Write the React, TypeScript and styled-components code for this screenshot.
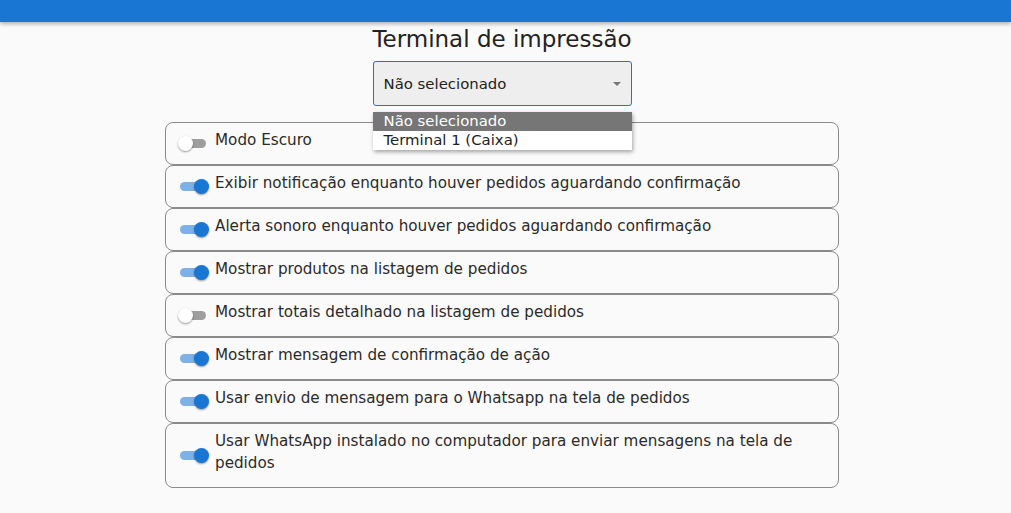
import * as React from "react";
import styled, { createGlobalStyle } from "styled-components";

const GlobalStyle = createGlobalStyle`
    html, body {
        margin: 0;
        padding: 0;
        background: #fafafa;
        font-family: "DejaVu Sans", Verdana, sans-serif;
        color: #333;
    }
`

interface Setting {
    label: string
    on: boolean
}

const settings: Setting[] = [
    {label: "Modo Escuro", on: false},
    {label: "Exibir notificação enquanto houver pedidos aguardando confirmação", on: true},
    {label: "Alerta sonoro enquanto houver pedidos aguardando confirmação", on: true},
    {label: "Mostrar produtos na listagem de pedidos", on: true},
    {label: "Mostrar totais detalhado na listagem de pedidos", on: false},
    {label: "Mostrar mensagem de confirmação de ação", on: true},
    {label: "Usar envio de mensagem para o Whatsapp na tela de pedidos", on: true},
    {label: "Usar WhatsApp instalado no computador para enviar mensagens na tela de pedidos", on: true},
];

export default function App() {
    return <>
        <GlobalStyle/>
        <TopBar/>
        <Page>
            <Title>Terminal de impressão</Title>
            <SelectWrap>
                <SelectBox>
                    <span>Não selecionado</span>
                    <Caret/>
                </SelectBox>
                <Menu>
                    <Option selected>Não selecionado</Option>
                    <Option>Terminal 1 (Caixa)</Option>
                </Menu>
            </SelectWrap>
            <List>
                {settings.map(s => <Row key={s.label}>
                    <Switch on={s.on}><Thumb on={s.on}/></Switch>
                    <Label>{s.label}</Label>
                </Row>)}
            </List>
        </Page>
    </>
}

const TopBar = styled.div`
    height: 22px;
    background: #1976d2;
    box-shadow: 0 2px 4px rgba(0, 0, 0, 0.3);
`

const Page = styled.div`
    display: flex;
    flex-direction: column;
    align-items: center;
    padding-right: 7px;
`

const Title = styled.h1`
    margin: 3px 0 0 0;
    font-size: 23px;
    font-weight: 400;
    line-height: 29px;
    color: #222;
`

const SelectWrap = styled.div`
    position: relative;
    margin-top: 7px;
    z-index: 2;
`

const SelectBox = styled.div`
    box-sizing: border-box;
    width: 259px;
    height: 45px;
    background: #eeeeee;
    border: 1px solid #1976d2;
    border-radius: 3px;
    display: flex;
    align-items: center;
    justify-content: space-between;
    padding: 0 10px 0 10px;
    font-size: 14.9px;
    color: #222;
`

const Caret = styled.span`
    width: 0;
    height: 0;
    border-left: 4px solid transparent;
    border-right: 4px solid transparent;
    border-top: 4px solid #777;
`

const Menu = styled.div`
    position: absolute;
    top: 51px;
    left: 0;
    width: 259px;
    background: #fff;
    box-shadow: 1px 2px 4px rgba(0, 0, 0, 0.35);
`

const Option = styled.div<{selected?: boolean}>`
    height: 19px;
    line-height: 19px;
    padding: 0 11px;
    font-size: 14.9px;
    background: ${props => props.selected ? "#767676" : "#fff"};
    color: ${props => props.selected ? "#fff" : "#222"};
`

const List = styled.div`
    margin-top: 16px;
    width: 674px;
    display: flex;
    flex-direction: column;
`

const Row = styled.div`
    box-sizing: border-box;
    display: flex;
    align-items: center;
    gap: 9px;
    min-height: 43px;
    border: 1px solid #8a8a8a;
    border-radius: 8px;
    padding: 6px 20px 13px 11px;
`

const Label = styled.div`
    font-size: 15.2px;
    line-height: 22px;
    color: #2a2a2a;
    align-self: flex-start;
`

const Switch = styled.div<{on: boolean}>`
    position: relative;
    flex: none;
    width: 26px;
    height: 9px;
    margin: 7px 0 0 3px;
    border-radius: 5px;
    background: ${props => props.on ? "#7eb1e8" : "#9e9e9e"};
`

const Thumb = styled.div<{on: boolean}>`
    position: absolute;
    top: -3px;
    left: ${props => props.on ? "14px" : "-2px"};
    width: 15px;
    height: 15px;
    border-radius: 50%;
    background: ${props => props.on ? "#1976d2" : "#fff"};
    box-shadow: 0 1px 2px rgba(0, 0, 0, 0.4);
`
